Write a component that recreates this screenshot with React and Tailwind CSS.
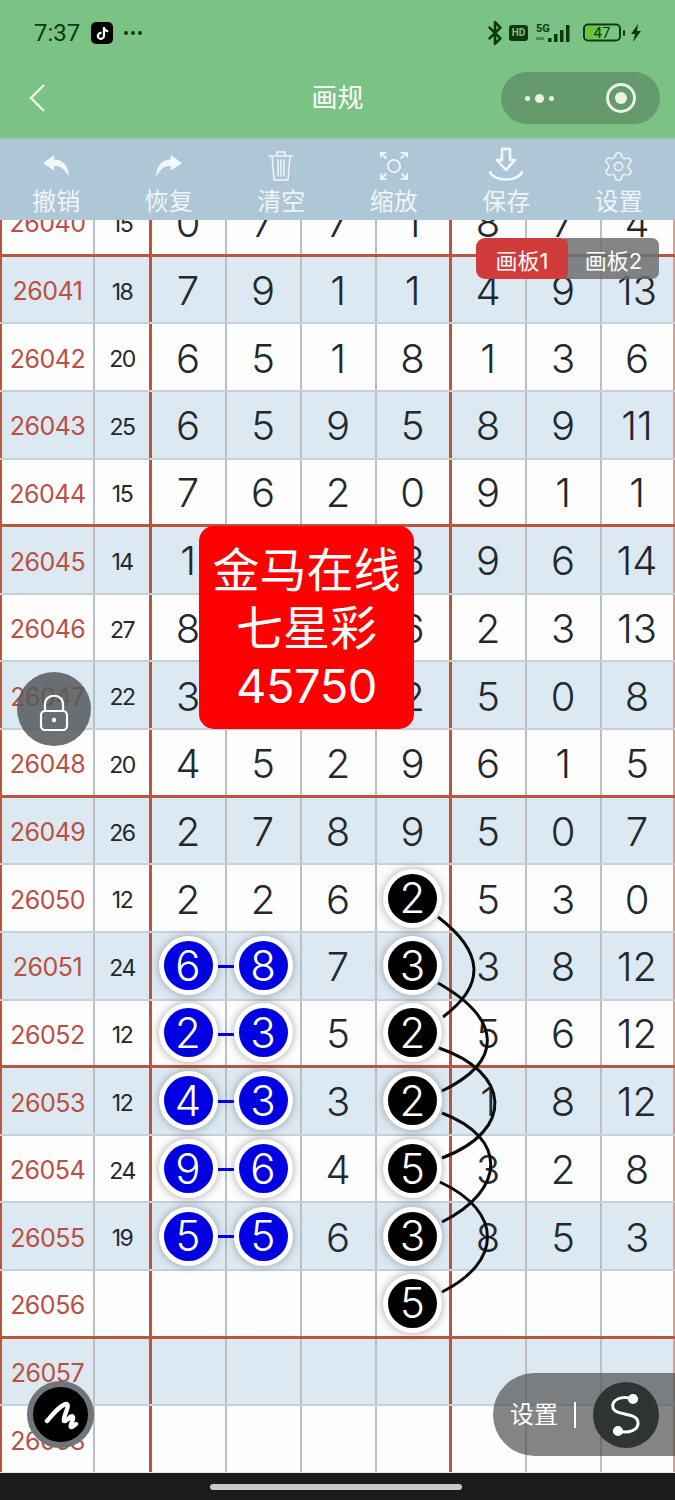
import React from 'react';
import { Settings, Bluetooth } from 'lucide-react';
import { FaTiktok } from 'react-icons/fa';

const rows = [
  ['26040','15','0','7','7','1','8','7','4'],
  ['26041','18','7','9','1','1','4','9','13'],
  ['26042','20','6','5','1','8','1','3','6'],
  ['26043','25','6','5','9','5','8','9','11'],
  ['26044','15','7','6','2','0','9','1','1'],
  ['26045','14','1','5','2','3','9','6','14'],
  ['26046','27','8','4','7','6','2','3','13'],
  ['26047','22','3','6','1','2','5','0','8'],
  ['26048','20','4','5','2','9','6','1','5'],
  ['26049','26','2','7','8','9','5','0','7'],
  ['26050','12','2','2','6','k2','5','3','0'],
  ['26051','24','b6','b8','7','k3','3','8','12'],
  ['26052','12','b2','b3','5','k2','5','6','12'],
  ['26053','12','b4','b3','3','k2','1','8','12'],
  ['26054','24','b9','b6','4','k5','3','2','8'],
  ['26055','19','b5','b5','6','k3','8','5','3'],
  ['26056','','','','','k5','','',''],
  ['26057','','','','','','','',''],
  ['26058','','','','','','','',''],
];

function Ball({ v }) {
  const blue = v[0] === 'b';
  return (
    <div className="w-[59px] h-[59px] rounded-full bg-white shadow-[0_0_8px_rgba(60,60,60,0.45)] flex items-center justify-center">
      <div className={`w-[49px] h-[49px] rounded-full flex items-center justify-center text-white text-[42px] font-light leading-none ${blue ? 'bg-[#0000e0]' : 'bg-black'}`}>
        {v.slice(1)}
      </div>
    </div>
  );
}

function Row({ r, i }) {
  const shaded = i % 2 === 1;
  const redBottom = i % 4 === 0;
  const bottom = redBottom ? 'border-b-[3px] border-b-[#b9573c]' : 'border-b-2 border-b-[#c6d0d8]';
  const cols = [2, 3, 4, 5, 6, 7, 8];
  return (
    <div className={`grid grid-cols-[95px_57px_75px_75px_75px_75px_75px_75px_73px] h-[67.625px] ${shaded ? 'bg-[#dce9f3]' : 'bg-[#fdfdfd]'} ${bottom}`}>
      <div className="border-l-2 border-l-[#b9573c] border-r-2 border-r-[#b9bfc3] flex items-center justify-center text-[#bb4f42] text-[25px] tracking-[-0.5px] pt-[5px]">{r[0]}</div>
      <div className="border-r-[3px] border-r-[#b9573c] flex items-center justify-center text-[#22282c] text-[23px] tracking-[-1.5px] pt-[5px]">{r[1]}</div>
      {cols.map((c) => {
        const v = r[c];
        const isBall = v[0] === 'b' || v[0] === 'k';
        const right = c === 5 ? 'border-r-[3px] border-r-[#b9573c]' : c === 8 ? 'border-r-[2px] border-r-[#d8a08e]' : 'border-r-2 border-r-[#b9bfc3]';
        return (
          <div key={c} className={`relative flex items-center justify-center text-[#22282c] text-[40px] font-light pt-[3px] pr-[1px] ${right}`}>
            {isBall ? (
              <div className="relative z-10 -mt-[3px]"><Ball v={v} /></div>
            ) : v}
            {c === 2 && v[0] === 'b' && (
              <div className="absolute z-10 left-[66px] top-[32px] w-[16px] h-[3px] bg-[#0000e0]" />
            )}
          </div>
        );
      })}
    </div>
  );
}

function Tool({ icon, label }) {
  return (
    <div className="flex flex-col items-center">
      <div className="h-[36px] flex items-center justify-center">{icon}</div>
      <div className="text-[24px] leading-[32px] mt-[2px] text-[#eff5f8]">{label}</div>
    </div>
  );
}

export default function App() {
  return (
    <div className="relative w-[675px] h-[1500px] overflow-hidden flex flex-col font-[family-name:Inter,'Noto_Sans_CJK_SC',sans-serif]">
      <div className="h-[138px] bg-[#7bc285] flex flex-col shrink-0">
        <div className="h-[66px] flex items-center pl-[34px] pr-[33px] font-[family-name:Roboto,sans-serif]">
          <span className="text-[24px] text-[#10380f] leading-none">7:37</span>
          <div className="ml-[11px] w-[22px] h-[22px] rounded-[5px] bg-black flex items-center justify-center">
            <FaTiktok className="text-white" size={13} />
          </div>
          <div className="ml-[11px] flex gap-[3px]">
            <div className="w-[4px] h-[4px] rounded-full bg-[#10380f]" />
            <div className="w-[4px] h-[4px] rounded-full bg-[#10380f]" />
            <div className="w-[4px] h-[4px] rounded-full bg-[#10380f]" />
          </div>
          <div className="ml-auto flex items-center">
            <Bluetooth size={26} strokeWidth={2.4} className="text-[#10380f] -mr-[2px]" />
            <div className="ml-[3px] w-[19px] h-[16px] rounded-[3px] bg-[#10380f] text-[#7bc285] text-[10px] font-bold flex items-center justify-center leading-none">HD</div>
            <svg width="40" height="24" viewBox="0 0 40 24" className="ml-[8px]">
              <text x="0" y="11" fontSize="11" fontWeight="700" fill="#10380f">5G</text>
              <rect x="12" y="17" width="3.5" height="4" fill="#10380f" />
              <rect x="18" y="13" width="3.5" height="8" fill="#10380f" />
              <rect x="24" y="9" width="3.5" height="12" fill="#10380f" />
              <rect x="30" y="4" width="3.5" height="17" fill="#10380f" />
              <rect x="0" y="16" width="8" height="3" fill="#4e8a55" />
            </svg>
            <svg width="44" height="20" viewBox="0 0 44 20" className="ml-[7px]">
              <rect x="1" y="1.5" width="36" height="16" rx="4" fill="none" stroke="#10380f" strokeWidth="2" />
              <rect x="3" y="3.5" width="16" height="12" rx="2" fill="#66c43a" />
              <text x="19" y="15" fontSize="15" textAnchor="middle" fill="#10380f">47</text>
              <rect x="40" y="7" width="2" height="6" rx="1" fill="#10380f" />
            </svg>
            <svg width="12" height="18" viewBox="0 0 12 18" className="ml-[3px]">
              <path d="M8 0 L1 10 H5 L3 18 L11 7 H7 Z" fill="#10380f" />
            </svg>
          </div>
        </div>
        <div className="relative flex-1 flex items-start pl-[29px] pr-[15px] pt-[6px]">
          <svg width="18" height="30" viewBox="0 0 18 30" className="mt-[11px]">
            <path d="M15 2 L2 15 L15 28" fill="none" stroke="#f2f8ee" strokeWidth="2.4" />
          </svg>
          <div className="absolute left-0 right-0 top-[13px] text-center text-white text-[26px] leading-[38px]">画规</div>
          <div className="ml-auto w-[159px] h-[52px] rounded-full bg-[#659a6c] flex items-center pl-[24px] pr-[24px]">
            <div className="flex items-center gap-[5px]">
              <div className="w-[5px] h-[5px] rounded-full bg-[#e9f4e6]" />
              <div className="w-[9px] h-[9px] rounded-full bg-[#e9f4e6]" />
              <div className="w-[5px] h-[5px] rounded-full bg-[#e9f4e6]" />
            </div>
            <div className="ml-auto w-[30px] h-[30px] rounded-full border-[3px] border-[#e9f4e6] flex items-center justify-center">
              <div className="w-[12px] h-[12px] rounded-full bg-[#e9f4e6]" />
            </div>
          </div>
        </div>
      </div>

      <div className="relative z-20 h-[82px] bg-[#adc7d6] grid grid-cols-6 shrink-0 pt-[9px] border-t border-t-[#9fbfc4]">
        <Tool label="撤销" icon={
          <svg width="28" height="24" viewBox="0 0 30 26"><path d="M13 1 L1 10 L13 18 V13 C20 12 25 17 29 25 C29 14 23 6 13 6 Z" fill="#f3f8fb" /></svg>
        } />
        <Tool label="恢复" icon={
          <svg width="28" height="24" viewBox="0 0 30 26"><path d="M17 1 L29 10 L17 18 V13 C10 12 5 17 1 25 C1 14 7 6 17 6 Z" fill="#f3f8fb" /></svg>
        } />
        <Tool label="清空" icon={
          <svg width="26" height="32" viewBox="0 0 26 32" fill="none" stroke="#f0f6f9" strokeWidth="1.5" strokeLinecap="round">
            <path d="M1 6 H25 M9 6 V2 H17 V6 M4 6 L6 30 H20 L22 6 M10 10 V26 M13 10 V26 M16 10 V26" />
          </svg>
        } />
        <Tool label="缩放" icon={
          <svg width="30" height="30" viewBox="0 0 32 32" fill="none" stroke="#f0f6f9" strokeWidth="2">
            <circle cx="16" cy="16" r="6.5" />
            <path d="M2 7 V2 H8 M2 2 L8 8 M30 7 V2 H23 M23 8 L30 2 M2 24 V30 H8 M2 30 L8 24 M30 24 V30 H23 M30 30 L24 24" />
          </svg>
        } />
        <Tool label="保存" icon={
          <svg width="36" height="36" viewBox="0 0 36 36" className="-mt-[3px]" fill="none" stroke="#f3f8fb" strokeWidth="2.6" strokeLinejoin="round" strokeLinecap="round">
            <path d="M14 2 H22 V13 H27 L18 23 L9 13 H14 Z" />
            <path d="M2 25 C6 35 30 35 34 25" />
          </svg>
        } />
        <Tool label="设置" icon={<Settings size={33} strokeWidth={1.1} className="text-[#eff5f8]" />} />
      </div>

      <div className="relative flex-1 overflow-hidden bg-[#fdfdfd]">
        <div className="-mt-[31px]">
          {rows.map((r, i) => <Row key={r[0]} r={r} i={i} />)}
        </div>
        <svg className="absolute left-0 top-0 z-[5] pointer-events-none" width="675" height="1252" viewBox="0 220 675 1252" fill="none" stroke="#0b0b0b" strokeWidth="3">
          <path d="M438 917 C 484 952, 486 985, 443 1017" />
          <path d="M438 983 C 500 1018, 506 1060, 442 1091" />
          <path d="M439 1048 C 510 1072, 516 1130, 442 1158" />
          <path d="M442 1113 C 508 1138, 506 1190, 442 1222" />
          <path d="M440 1182 C 504 1212, 502 1262, 442 1292" />
        </svg>
      </div>

      <div className="h-[28px] bg-[#1b1b1b] border-t border-t-[#e6e6e6] flex items-center justify-center shrink-0">
        <div className="w-[252px] h-[6px] mr-[4px] rounded-full bg-[#c9c9c9]" />
      </div>

      {/* overlays */}
      <div className="absolute z-30 left-[476px] top-[238px] flex text-white text-[22px] leading-[47px]">
        <div className="w-[92px] h-[41px] rounded-l-[9px] rounded-r-[7px] bg-[#d23b3b] text-center relative z-10">画板1</div>
        <div className="w-[95px] h-[41px] -ml-[4px] pl-[4px] rounded-r-[7px] bg-[#6e6e6e]/85 text-center">画板2</div>
      </div>

      <div className="absolute z-30 left-[199px] top-[526px] w-[215px] h-[203px] rounded-[15px] bg-[#ff0000] text-white text-[47px] leading-[58px] flex flex-col items-center justify-center">
        <div>金马在线</div>
        <div>七星彩</div>
        <div className="tracking-[-0.5px]">45750</div>
      </div>

      <div className="absolute z-30 left-[17px] top-[672px] w-[74px] h-[74px] rounded-full bg-[#55585b]/85 flex items-center justify-center">
        <svg width="30" height="38" viewBox="0 0 30 38" fill="none" stroke="#fff" strokeWidth="2.2" className="mt-[5px]">
          <path d="M6 18 V11 C6 0 24 0 24 11 V18" />
          <rect x="2" y="18" width="26" height="19" rx="4" />
          <circle cx="15" cy="27" r="2.2" fill="#fff" stroke="none" />
        </svg>
      </div>

      <div className="absolute z-30 left-[27px] top-[1381px] w-[67px] h-[67px] rounded-full bg-black border-[6px] border-[#6f7578] flex items-center justify-center">
        <svg width="36" height="32" viewBox="0 0 36 32" fill="none" stroke="#fff" strokeWidth="4.4" strokeLinecap="round" strokeLinejoin="round">
          <path d="M4 22 C 10 15, 18 5, 24 5 C 27 7, 19 20, 21 22 C 24 23, 28 15, 30 18 C 31 21, 26 27, 28 28 C 30 28, 32 26, 33 25" />
        </svg>
      </div>

      <div className="absolute z-30 left-[493px] top-[1373px] w-[182px] h-[83px] rounded-l-full bg-[#505050]/70 flex items-center pl-[17px] text-white text-[24px]">
        <span>设置</span>
        <div className="ml-[16px] w-[2px] h-[26px] bg-white" />
        <div className="ml-[17px] w-[66px] h-[66px] rounded-full bg-[#2f3333] flex items-center justify-center">
          <svg width="66" height="66" viewBox="0 0 66 66" fill="none" stroke="#fff" strokeWidth="3">
            <path d="M40 17 C 28 13, 18 18, 20 26 C 22 34, 44 30, 45 40 C 46 48, 36 52, 25 49" />
            <circle cx="40" cy="17" r="3.6" fill="#fff" />
            <circle cx="25" cy="49" r="3.6" fill="#fff" />
          </svg>
        </div>
      </div>
    </div>
  );
}
